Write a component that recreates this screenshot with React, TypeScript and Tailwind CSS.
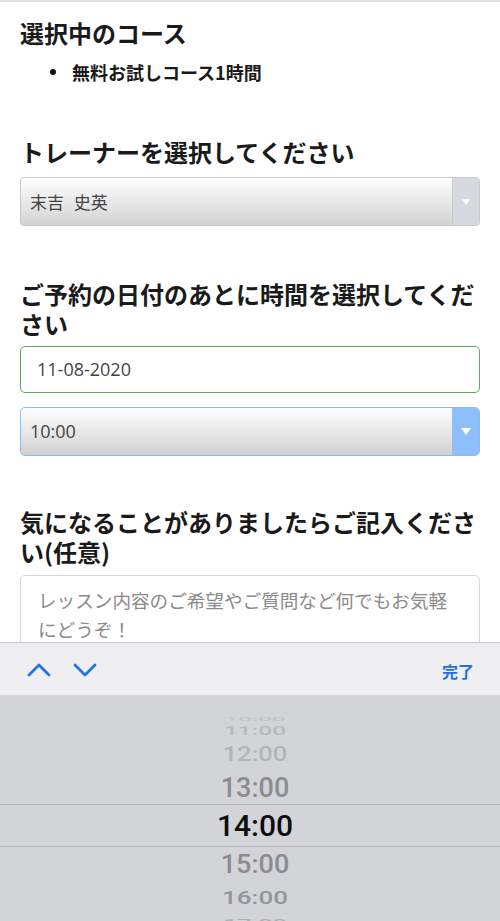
import React from "react";

const jp = "font-['Noto_Sans_CJK_JP','Noto_Sans',sans-serif]";
const latin = "font-['Open_Sans','Noto_Sans_CJK_JP',sans-serif]";

function Heading({ children, className = "" }: { children: React.ReactNode; className?: string }) {
  return (
    <h2 className={`${jp} text-[24px] leading-[30px] font-bold text-[#1a1a1a] ${className}`}>
      {children}
    </h2>
  );
}

function Caret({ className = "" }: { className?: string }) {
  return (
    <svg viewBox="0 0 10 7" className={className}>
      <path d="M0 0h10L5 7z" fill="#fff" />
    </svg>
  );
}

function Chevron({ up }: { up?: boolean }) {
  return (
    <svg viewBox="0 0 24 14" className="w-[24px] h-[14px]">
      <path
        d={up ? "M2 12L12 2l10 10" : "M2 2l10 10L22 2"}
        fill="none"
        stroke="#1f72ea"
        strokeWidth="2.8"
        strokeLinecap="round"
        strokeLinejoin="round"
      />
    </svg>
  );
}

const times = [
  { t: "10:00", h: "h-[12px]", cls: "text-[24px] text-[#c4c4c8] scale-y-[0.25]" },
  { t: "11:00", h: "h-[13px]", cls: "text-[24.5px] text-[#b9b9bd] scale-y-[0.52]" },
  { t: "12:00", h: "h-[34px]", cls: "text-[25.5px] text-[#b4b4b9] scale-y-[0.77]" },
  { t: "13:00", h: "h-[32px]", cls: "text-[27px] text-[#8c8c90]" },
];

const timesAfter = [
  { t: "15:00", h: "h-[36px]", cls: "text-[27px] text-[#8c8c90] scale-y-[0.94]" },
  { t: "16:00", h: "h-[29px]", cls: "text-[26px] text-[#959599] scale-y-[0.7]" },
  { t: "17:00", h: "h-[22px]", cls: "text-[25px] text-[#adadb2] scale-y-[0.45]" },
];

function PickerRow({ t, h, cls }: { t: string; h: string; cls: string }) {
  return (
    <div className={`${h} shrink-0 flex items-center justify-center pl-[10px]`}>
      <span className={`font-['Roboto',sans-serif] font-medium leading-none ${cls}`}>{t}</span>
    </div>
  );
}

export default function App() {
  return (
    <div className="relative w-[500px] h-[921px] overflow-hidden bg-white">
      <div className="border-t-2 border-[#e2e2e2] px-5 pt-4">
        <Heading>選択中のコース</Heading>
        <div className="mt-3 flex items-center h-6 pl-[30px] gap-[16px]">
          <span className="w-[6px] h-[6px] rounded-full bg-[#111]" />
          <span className={`${jp} text-[18px] font-bold text-[#1a1a1a]`}>無料お試しコース1時間</span>
        </div>

        <Heading className="mt-[53px]">トレーナーを選択してください</Heading>
        <div className="mt-[10px] h-[49px] flex rounded-[4px] border border-[#c9c9c9] overflow-hidden bg-gradient-to-b from-white to-[#d3d3d3]">
          <div className={`${jp} flex-1 flex items-center pl-[9px] text-[17px] text-[#444] [word-spacing:6px]`}>
            末吉 史英
          </div>
          <div className="w-[27px] flex items-center justify-center bg-[#d6d9de] border-l border-[#c8ccd2]">
            <Caret className="w-[8px] h-[6px]" />
          </div>
        </div>

        <Heading className="mt-[53px]">ご予約の日付のあとに時間を選択してください</Heading>
        <div className={`${latin} mt-[7px] h-[47px] flex items-center pl-[16px] rounded-[5px] border-[1.5px] border-[#5aae5a] text-[18px] text-[#444]`}>
          11-08-2020
        </div>
        <div className="mt-[14px] h-[49px] flex rounded-[5px] border-[1.5px] border-[#8dbaf3] overflow-hidden bg-gradient-to-b from-white to-[#d0d0d0]">
          <div className={`${latin} flex-1 flex items-center pl-[9px] text-[18px] text-[#444]`}>10:00</div>
          <div className="w-[27px] flex items-center justify-center bg-[#8fbffa]">
            <Caret className="w-[10px] h-[7px]" />
          </div>
        </div>

        <Heading className="mt-[51px]">気になることがありましたらご記入ください(任意)</Heading>
        <div className={`${jp} mt-[8px] h-[140px] rounded-[5px] border border-[#d8d8d8] pl-[17px] pr-[17px] pt-[10px] text-[18.6px] leading-[28.5px] text-[#8a8a8a]`}>
          レッスン内容のご希望やご質問など何でもお気軽にどうぞ！
        </div>
      </div>

      <div className="absolute left-0 right-0 bottom-0 h-[279px] flex flex-col">
        <div className="h-[53px] shrink-0 flex items-center justify-between bg-[#efeff2] border-t border-[#c6c6ca] pl-[27px] pr-[26px]">
          <div className="flex items-center gap-[22px] pt-[2px]">
            <Chevron up />
            <Chevron />
          </div>
          <span className={`${jp} text-[16px] font-bold text-[#1f6fe8] pt-[4px]`}>完了</span>
        </div>
        <div className="flex-1 min-h-0 overflow-hidden flex flex-col bg-[#d3d4d8] pt-[18px]">
          {times.map((r) => (
            <PickerRow key={r.t} {...r} />
          ))}
          <div className="h-[43px] shrink-0 flex items-center justify-center pl-[10px] border-y border-[#b6b6bb]">
            <span className="font-['Roboto',sans-serif] font-medium leading-none text-[30px] text-[#0d0d0d]">14:00</span>
          </div>
          {timesAfter.map((r) => (
            <PickerRow key={r.t} {...r} />
          ))}
        </div>
      </div>
    </div>
  );
}
